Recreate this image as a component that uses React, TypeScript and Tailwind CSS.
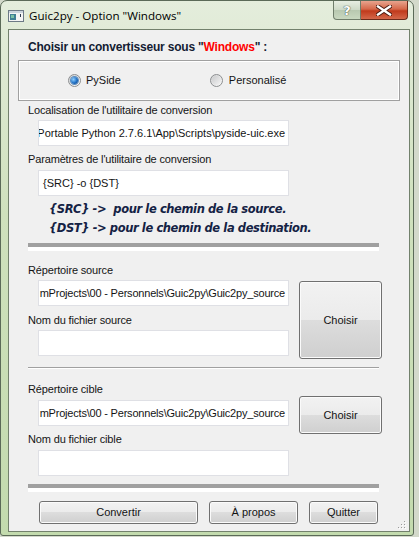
import React from "react";

const labelCls =
  "ml-[10px] h-[14px] leading-[14px] text-[11px] tracking-[-0.15px] text-[#141414] whitespace-nowrap";

const noteCls =
  "ml-[31px] h-[14px] font-['DejaVu_Sans',sans-serif] text-[11.5px] font-bold italic leading-[14px] tracking-[-0.4px] text-[#142244] whitespace-pre";

function TextBox({
  value,
  scrolled,
  className,
}: {
  value?: string;
  scrolled?: boolean;
  className?: string;
}) {
  return (
    <div
      className={
        "ml-[20px] flex h-[26px] w-[251px] items-center overflow-hidden border border-[#dfe0e5] bg-white text-[11px] text-[#141414] whitespace-nowrap " +
        (scrolled ? "justify-end pr-[3px] " : "pl-[4px] ") +
        (className ?? "")
      }
    >
      {value}
    </div>
  );
}

function Button({ label, className }: { label: string; className: string }) {
  return (
    <div
      className={
        "flex items-center justify-center rounded-[3px] border border-[#707070] bg-[linear-gradient(#f2f2f2_0%,#ebebeb_50%,#dddddd_50%,#cfcfcf_100%)] text-[11px] text-[#141414] shadow-[inset_0_0_0_1px_#fbfbfb] " +
        className
      }
    >
      {label}
    </div>
  );
}

function Radio({ checked }: { checked?: boolean }) {
  return (
    <div className="flex h-[13px] w-[13px] items-center justify-center rounded-full border border-[#8c8e90] bg-[linear-gradient(135deg,#d0d1d2,#fbfbfb)]">
      {checked ? (
        <div className="h-[7px] w-[7px] rounded-full bg-[radial-gradient(circle_at_35%_35%,#8fd0ff,#1f6fc4_55%,#123c78)] shadow-[0_0_0_1px_#5b8dbf]" />
      ) : (
        <div className="h-[9px] w-[9px] rounded-full bg-[linear-gradient(135deg,#c9cacc,#f4f4f4)]" />
      )}
    </div>
  );
}

function ThickSeparator({ className }: { className: string }) {
  return (
    <div
      className={
        "ml-[10px] h-[8px] w-[351px] border-t-4 border-b-4 border-t-[#a0a0a0] border-b-white " +
        className
      }
    />
  );
}

export default function App() {
  return (
    <div className="h-[537px] w-[419px] bg-[#d3d9cb] font-['Liberation_Sans',Arial,sans-serif]">
      <div className="flex h-[536px] w-[414px] flex-col rounded-t-[7px] rounded-b-[3px] border border-[#5b6a58] bg-[linear-gradient(#e4eddc,#cfe1bd_40%,#c3dbae)]">
        {/* title bar */}
        <div className="flex h-[28px] items-start">
          <div className="mt-[7px] ml-[7px] flex items-center">
            <svg width="16" height="12" viewBox="0 0 16 12">
              <rect x="0.5" y="0.5" width="15" height="11" fill="#f4f4f4" stroke="#6d7a86" />
              <rect x="1" y="1" width="14" height="2" fill="#c9d3dc" />
              <rect x="2" y="4" width="6" height="6" fill="#3f7f94" />
              <rect x="3" y="5" width="3" height="3" fill="#7bc0a6" />
              <rect x="12" y="4" width="1" height="3" fill="#2c3a4c" />
            </svg>
            <span className="ml-[5px] font-['Open_Sans',sans-serif] text-[11.6px] leading-[16px] text-black">
              Guic2py - Option "Windows"
            </span>
          </div>
          <div className="ml-auto mr-[5px] flex">
            <div className="flex h-[19px] w-[28px] items-center justify-center rounded-bl-[4px] border border-t-0 border-[#6f7d6a] bg-[linear-gradient(#e7eee2,#cdd9c6_50%,#b8c8b0_51%,#c9d8c0)] font-['DejaVu_Sans',sans-serif] text-[13px] font-bold leading-none text-white [text-shadow:0_0_1px_#3a4a3a,0_0_1px_#3a4a3a]">
              ?
            </div>
            <div className="flex h-[19px] w-[47px] items-center justify-center rounded-br-[4px] border border-t-0 border-l-0 border-[#6a2a1a] bg-[linear-gradient(#e8a48e,#d5684a_45%,#c03a1c_55%,#d4674a)]">
              <svg width="16" height="11" viewBox="0 0 16 11">
                <path
                  d="M2 1.5 L14 9.5 M14 1.5 L2 9.5"
                  stroke="#4a1a10"
                  strokeWidth="4.2"
                  strokeLinecap="square"
                />
                <path
                  d="M2 1.5 L14 9.5 M14 1.5 L2 9.5"
                  stroke="#ffffff"
                  strokeWidth="2.4"
                  strokeLinecap="square"
                />
              </svg>
            </div>
          </div>
        </div>

        {/* client area */}
        <div className="relative mr-[3px] mb-[3px] ml-[7px] flex-1 border border-[#72816c] bg-[#f0f0f0]">
          <div className="flex flex-col px-[9px] pt-[10px]">
            <div className="ml-[10px] h-[14px] text-[12px] font-bold leading-[14px] tracking-[-0.2px] text-[#141c33] whitespace-nowrap">
              Choisir un convertisseur sous "<span className="text-[#ff0000]">Windows</span>" :
            </div>

            <div className="mt-[6px] flex h-[41px] items-center border border-[#a0a0a0] shadow-[inset_0_0_0_1px_#ffffff]">
              <div className="ml-[49px] flex items-center">
                <Radio checked />
                <span className="ml-[5px] text-[11px] text-[#141414]">PySide</span>
              </div>
              <div className="ml-[89px] flex items-center">
                <Radio />
                <span className="ml-[6px] text-[11px] text-[#141414]">Personalisé</span>
              </div>
            </div>

            <div className={labelCls + " mt-[2px]"}>
              Localisation de l'utilitaire de conversion
            </div>
            <TextBox
              className="mt-[3px]"
              scrolled
              value="Portable Python 2.7.6.1\App\Scripts\pyside-uic.exe"
            />

            <div className={labelCls + " mt-[6px]"}>
              Paramètres de l'utilitaire de conversion
            </div>
            <TextBox className="mt-[4px]" value="{SRC} -o {DST}" />

            <div className={noteCls + " mt-[6px]"}>
              {"{SRC} ->  pour le chemin de la source."}
            </div>
            <div className={noteCls + " mt-[5px]"}>
              {"{DST} -> pour le chemin de la destination."}
            </div>

            <ThickSeparator className="mt-[8px]" />

            {/* source */}
            <div className="mt-[12px] flex">
              <div className="w-[281px]">
                <div className={labelCls}>Répertoire source</div>
                <TextBox
                  className="mt-[3px] tracking-[-0.2px]"
                  scrolled
                  value="mProjects\00 - Personnels\Guic2py\Guic2py_source"
                />
                <div className={labelCls + " mt-[7px]"}>Nom du fichier source</div>
                <TextBox className="mt-[3px]" />
              </div>
              <Button label="Choisir" className="mt-[18px] h-[78px] w-[83px]" />
            </div>

            <div className="ml-[10px] mt-[8px] h-[2px] w-[351px] border-t border-b border-t-[#a0a0a0] border-b-white" />

            {/* cible */}
            <div className="mt-[13px] flex">
              <div className="w-[281px]">
                <div className={labelCls}>Répertoire cible</div>
                <TextBox
                  className="mt-[4px] tracking-[-0.2px]"
                  scrolled
                  value="mProjects\00 - Personnels\Guic2py\Guic2py_source"
                />
                <div className={labelCls + " mt-[6px]"}>Nom du fichier cible</div>
                <TextBox className="mt-[4px]" />
              </div>
              <Button label="Choisir" className="mt-[14px] h-[38px] w-[83px]" />
            </div>

            <ThickSeparator className="mt-[8px]" />

            <div className="mt-[9px] flex h-[23px]">
              <Button label="Convertir" className="ml-[21px] w-[159px]" />
              <Button label="À propos" className="ml-[11px] w-[89px]" />
              <Button label="Quitter" className="ml-[11px] w-[69px]" />
            </div>
          </div>

          {/* size grip */}
          <svg
            className="absolute right-[3px] bottom-[2px]"
            width="8"
            height="8"
            viewBox="0 0 8 8"
          >
            {[
              [6, 0],
              [3, 3],
              [6, 3],
              [0, 6],
              [3, 6],
              [6, 6],
            ].map(([x, y]) => (
              <g key={`${x}-${y}`}>
                <rect x={x + 1} y={y + 1} width="1" height="1" fill="#ffffff" />
                <rect x={x} y={y} width="1" height="1" fill="#9a9a9a" />
              </g>
            ))}
          </svg>
        </div>
      </div>
    </div>
  );
}
